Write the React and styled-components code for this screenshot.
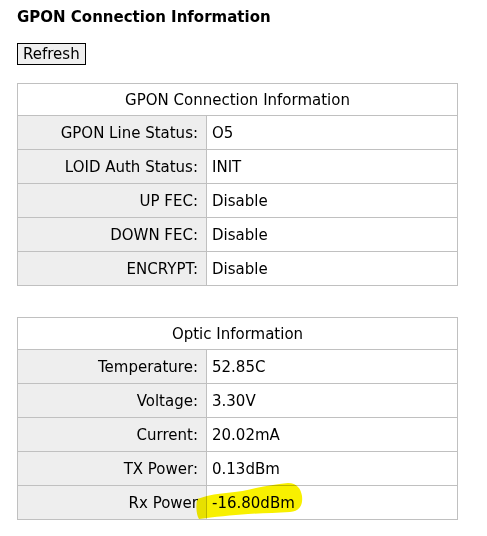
import React from "react";
import styled, { createGlobalStyle } from "styled-components";

const GlobalStyle = createGlobalStyle`
  body {
    margin: 0;
    background: #fff;
    font-family: "DejaVu Sans", Verdana, sans-serif;
    color: #000;
  }
`;

const Page = styled.div`
  position: relative;
  padding: 8px 17px;
`;

const Title = styled.h1`
  margin: 0;
  font-size: 15px;
  font-weight: bold;
  line-height: 18px;
`;

const RefreshButton = styled.button`
  margin-top: 17px;
  height: 22px;
  padding: 0 5px;
  font-family: inherit;
  font-size: 15px;
  line-height: 18px;
  background: #efefef;
  border: 1px solid #000;
  border-radius: 0;
  color: #000;
`;

const InfoTable = styled.table`
  width: 441px;
  margin-top: ${(p) => p.$top}px;
  border-collapse: collapse;
  font-size: 15px;
  border: 1px solid #c0c0c0;
`;

const HeadCell = styled.th`
  height: 31px;
  padding: 0;
  font-weight: normal;
  text-align: center;
  background: #fff;
  border: 1px solid #c0c0c0;
`;

const Label = styled.td`
  width: 180px;
  height: 33px;
  padding: 0 8px 0 0;
  text-align: right;
  background: #eeeeee;
  border: 1px solid #c0c0c0;
`;

const Value = styled.td`
  padding: 0 0 0 5px;
  background: #fff;
  border: 1px solid #c0c0c0;
`;

const Marker = styled.svg`
  position: absolute;
  left: 0;
  top: 0;
  pointer-events: none;
  mix-blend-mode: multiply;
`;

const gpon = [
  ["GPON Line Status:", "O5"],
  ["LOID Auth Status:", "INIT"],
  ["UP FEC:", "Disable"],
  ["DOWN FEC:", "Disable"],
  ["ENCRYPT:", "Disable"],
];

const optic = [
  ["Temperature:", "52.85C"],
  ["Voltage:", "3.30V"],
  ["Current:", "20.02mA"],
  ["TX Power:", "0.13dBm"],
  ["Rx Power", "-16.80dBm"],
];

function Section({ title, rows, top }) {
  return (
    <InfoTable $top={top}>
      <thead>
        <tr>
          <HeadCell colSpan={2}>{title}</HeadCell>
        </tr>
      </thead>
      <tbody>
        {rows.map(([k, v]) => (
          <tr key={k}>
            <Label>{k}</Label>
            <Value>{v}</Value>
          </tr>
        ))}
      </tbody>
    </InfoTable>
  );
}

export default function App() {
  return (
    <>
      <GlobalStyle />
      <Page>
        <Title>GPON Connection Information</Title>
        <RefreshButton>Refresh</RefreshButton>
        <Section title="GPON Connection Information" rows={gpon} top={18} />
        <Section title="Optic Information" rows={optic} top={31} />
        <Marker width="487" height="536" viewBox="0 0 487 536">
          <path
            d="M197 499 C206 496 214 494 226 493 C238 492 248 490 256 488 C266 486 276 484 288 483 C297 483 301 489 302 496 C303 505 300 511 290 512 C276 513 262 513 248 514 C232 515 214 517 199 519 C196 514 196 506 197 499 Z"
            fill="#f8f000"
          />
        </Marker>
      </Page>
    </>
  );
}
